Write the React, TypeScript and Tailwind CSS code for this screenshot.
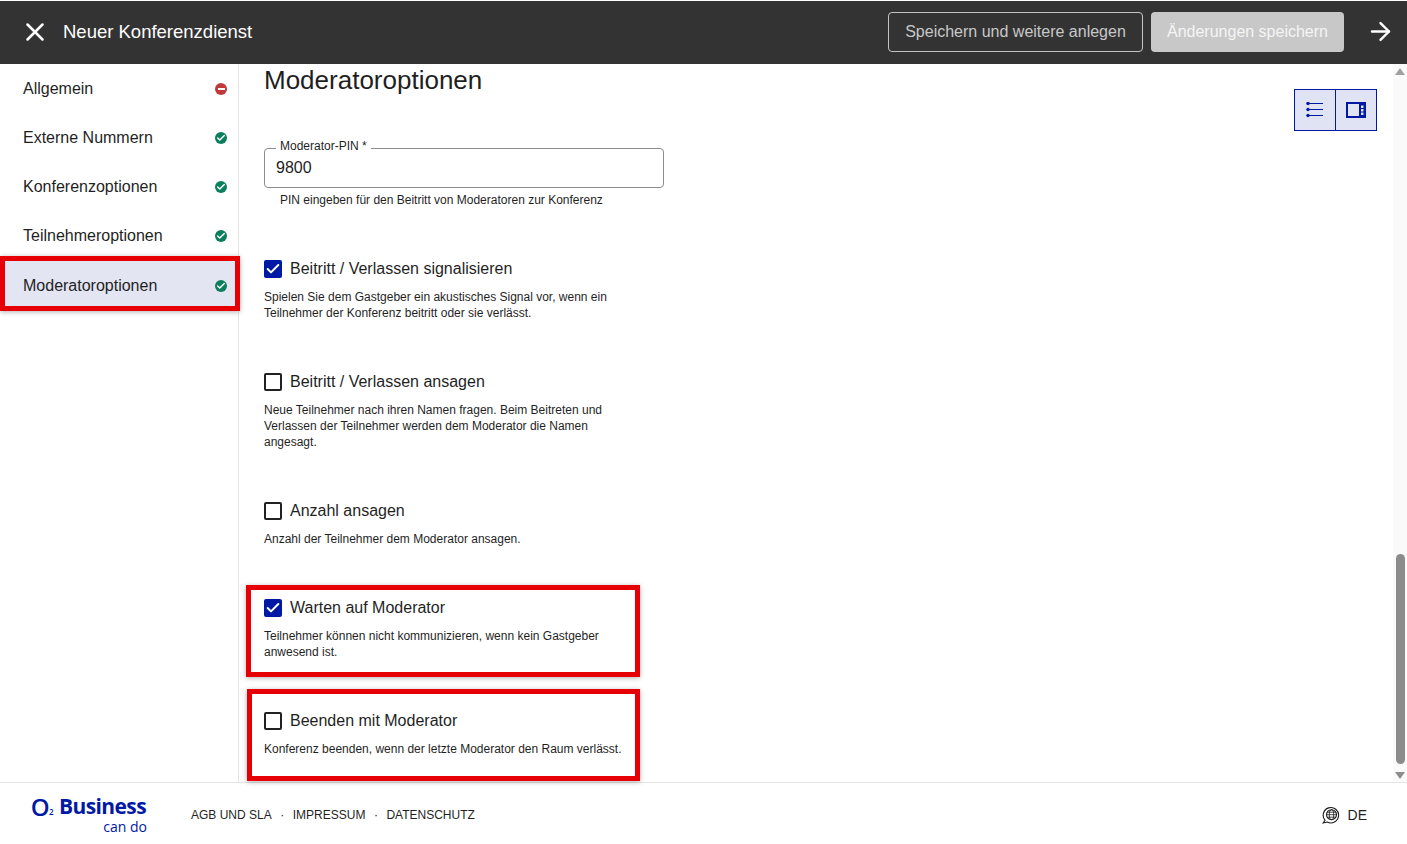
import React from "react";
import { X, ArrowRight, Check } from "lucide-react";

const navItems = [
  { name: "Allgemein", ok: false },
  { name: "Externe Nummern", ok: true },
  { name: "Konferenzoptionen", ok: true },
  { name: "Teilnehmeroptionen", ok: true },
  { name: "Moderatoroptionen", ok: true, active: true },
];

const options = [
  {
    label: "Beitritt / Verlassen signalisieren",
    checked: true,
    text: "Spielen Sie dem Gastgeber ein akustisches Signal vor, wenn ein Teilnehmer der Konferenz beitritt oder sie verlässt.",
  },
  {
    label: "Beitritt / Verlassen ansagen",
    checked: false,
    text: "Neue Teilnehmer nach ihren Namen fragen. Beim Beitreten und Verlassen der Teilnehmer werden dem Moderator die Namen angesagt.",
  },
  {
    label: "Anzahl ansagen",
    checked: false,
    text: "Anzahl der Teilnehmer dem Moderator ansagen.",
  },
  {
    label: "Warten auf Moderator",
    checked: true,
    text: "Teilnehmer können nicht kommunizieren, wenn kein Gastgeber anwesend ist.",
  },
  {
    label: "Beenden mit Moderator",
    checked: false,
    text: "Konferenz beenden, wenn der letzte Moderator den Raum verlässt.",
  },
];

const StatusDot = ({ ok }: { ok: boolean }) =>
  ok ? (
    <span className="flex h-3 w-3 items-center justify-center rounded-full bg-[#0b7f5c]">
      <Check className="h-2.5 w-2.5 text-white" strokeWidth={3.5} />
    </span>
  ) : (
    <span className="flex h-3 w-3 items-center justify-center rounded-full bg-[#c0393b]">
      <span className="h-[2px] w-[7px] bg-white" />
    </span>
  );

const Option = ({ label, checked, text }: { label: string; checked: boolean; text: string }) => (
  <div className="mb-[49px]">
    <div className="flex h-6 items-center gap-2">
      {checked ? (
        <span className="flex h-[18px] w-[18px] items-center justify-center rounded-[2px] bg-[#0019a5]">
          <Check className="h-4 w-4 text-white" strokeWidth={3} />
        </span>
      ) : (
        <span className="h-[18px] w-[18px] rounded-[2px] border-2 border-[#222222]" />
      )}
      <span className="text-base text-[#1f1f1f]">{label}</span>
    </div>
    <p className="mt-2 w-[365px] text-xs leading-4 text-[#1f1f1f]">{text}</p>
  </div>
);

const Marker = ({ className }: { className: string }) => (
  <div className={`pointer-events-none absolute border-[5px] border-[#e60005] shadow-[0_1px_5px_rgba(0,0,0,0.3)] ${className}`} />
);

export default function App() {
  return (
    <div className="relative flex h-[844px] w-[1407px] flex-col overflow-hidden bg-white pt-px font-['Liberation_Sans',Arial,sans-serif]">
      <header className="flex h-[63px] shrink-0 items-center bg-[#333333] pb-[2px] pr-[12px] text-white">
        <X className="ml-[20px] h-[30px] w-[30px]" strokeWidth={2} />
        <h2 className="ml-[13px] text-[18.5px]">Neuer Konferenzdienst</h2>
        <button className="ml-auto h-10 w-[255px] rounded border border-[#c4c4c4] text-base text-[#c8c8c8]">
          Speichern und weitere anlegen
        </button>
        <button className="ml-2 h-10 w-[193px] rounded bg-[#c8c8c8] text-base text-[#f5f5f5]">
          Änderungen speichern
        </button>
        <ArrowRight className="ml-[22px] h-[29px] w-[29px]" strokeWidth={2} />
      </header>

      <div className="flex min-h-0 flex-1">
        <nav className="w-[239px] shrink-0 border-r border-[#e4e4e4]">
          {navItems.map((item) => (
            <div
              key={item.name}
              className={`flex h-[49px] items-center justify-between pl-[23px] pr-[11px] text-base text-[#1f1f1f] ${item.active ? "bg-[#e3e5f3] pt-[2px]" : ""}`}
            >
              {item.name}
              <StatusDot ok={item.ok} />
            </div>
          ))}
        </nav>

        <main className="flex min-w-0 flex-1 overflow-hidden">
          <div className="w-[425px] shrink-0 pl-[25px]">
            <h1 className="h-[84px] pt-[1px] text-[26px] leading-[30px] text-[#1f1f1f]">Moderatoroptionen</h1>
            <div className="relative h-10 w-[400px] rounded border border-[#8c8c8c] pl-[11px] text-base leading-[38px] text-[#1f1f1f]">
              9800
              <span className="absolute left-[11px] top-[-10px] bg-white px-1 text-xs leading-[14px] text-[#1f1f1f]">
                Moderator-PIN *
              </span>
            </div>
            <p className="mb-[50px] mt-[5px] pl-4 text-xs leading-[14px] text-[#1f1f1f]">
              PIN eingeben für den Beitritt von Moderatoren zur Konferenz
            </p>
            {options.map((option) => (
              <Option key={option.label} {...option} />
            ))}
          </div>

          <div className="flex flex-1 justify-end pr-[16px] pt-[25px]">
            <div className="flex h-[42px] w-[83px] border border-[#0019a5] bg-[#dfe3f3]">
              <div className="flex flex-1 items-center justify-center border-r border-[#0019a5]">
                <svg width="18" height="16" viewBox="0 0 18 16" fill="none" stroke="#0019a5">
                  <path d="M3 1.5h14M3 7.5h14M3 13.5h14" />
                  <circle cx="2" cy="1.5" r="1.7" fill="#0019a5" stroke="none" />
                  <circle cx="2" cy="7.5" r="1.7" fill="#0019a5" stroke="none" />
                  <circle cx="2" cy="13.5" r="1.7" fill="#0019a5" stroke="none" />
                </svg>
              </div>
              <div className="flex flex-1 items-center justify-center">
                <svg width="20" height="16" viewBox="0 0 20 16" fill="none">
                  <rect x="1" y="1" width="18" height="14" stroke="#0019a5" strokeWidth="2" />
                  <rect x="13" y="1" width="6" height="14" fill="#0019a5" />
                  <rect x="15" y="3.5" width="2.5" height="2.5" fill="#dfe3f3" />
                  <rect x="15" y="7" width="2.5" height="2.5" fill="#dfe3f3" />
                  <rect x="15" y="10.5" width="2.5" height="2.5" fill="#dfe3f3" />
                </svg>
              </div>
            </div>
          </div>

          <div className="flex w-[14px] shrink-0 flex-col items-center bg-[#fafafa] pb-[3px] pt-[4px]">
            <span className="h-0 w-0 border-x-[5px] border-b-[7px] border-x-transparent border-b-[#a0a0a0]" />
            <div className="mt-[479px] h-[210px] w-[9px] rounded-full bg-[#8c8c8c]" />
            <span className="mt-auto h-0 w-0 border-x-[5px] border-t-[7px] border-x-transparent border-t-[#8c8c8c]" />
          </div>
        </main>
      </div>

      <footer className="flex h-[62px] shrink-0 items-center border-t border-[#e4e4e4] pr-[40px] pt-[2px] text-xs text-[#1f1f1f]">
        <div className="ml-[32px] w-[115px] text-right font-['Open_Sans',sans-serif] text-[#0019a5]">
          <div className="flex h-[23px] items-end justify-end pr-px text-[21px] font-bold leading-[23px] tracking-[-0.6px]">
            <span className="text-[24px] font-semibold leading-[23px]">O</span>
            <span className="mr-[6px] text-[8px] font-semibold leading-[12px]">2</span>
            Business
          </div>
          <div className="mt-[1px] text-sm leading-[16px]">can do</div>
        </div>
        <div className="ml-[44px] flex items-center">
          <span>AGB UND SLA</span>
          <span className="mx-[8.5px]">·</span>
          <span>IMPRESSUM</span>
          <span className="mx-[8.5px]">·</span>
          <span>DATENSCHUTZ</span>
        </div>
        <div className="ml-auto flex items-center gap-2 text-sm">
          <svg width="18" height="18" viewBox="0 0 18 18" fill="none" stroke="#1a1a1a" strokeWidth="1.1">
            <path d="M3 14.2A7.7 7.7 0 1 1 5.2 16L1.2 17Z" />
            <circle cx="9.5" cy="8.7" r="5" />
            <ellipse cx="9.5" cy="8.7" rx="2.2" ry="5" strokeWidth="0.8" />
            <path d="M4.5 8.7h10M5.2 6.2h8.6M5.2 11.2h8.6" strokeWidth="0.8" />
          </svg>
          DE
        </div>
      </footer>

      <Marker className="left-0 top-[256px] h-[55px] w-[240px]" />
      <Marker className="left-[246px] top-[585px] h-[92px] w-[394px]" />
      <Marker className="left-[247px] top-[689px] h-[92px] w-[393px]" />
    </div>
  );
}
